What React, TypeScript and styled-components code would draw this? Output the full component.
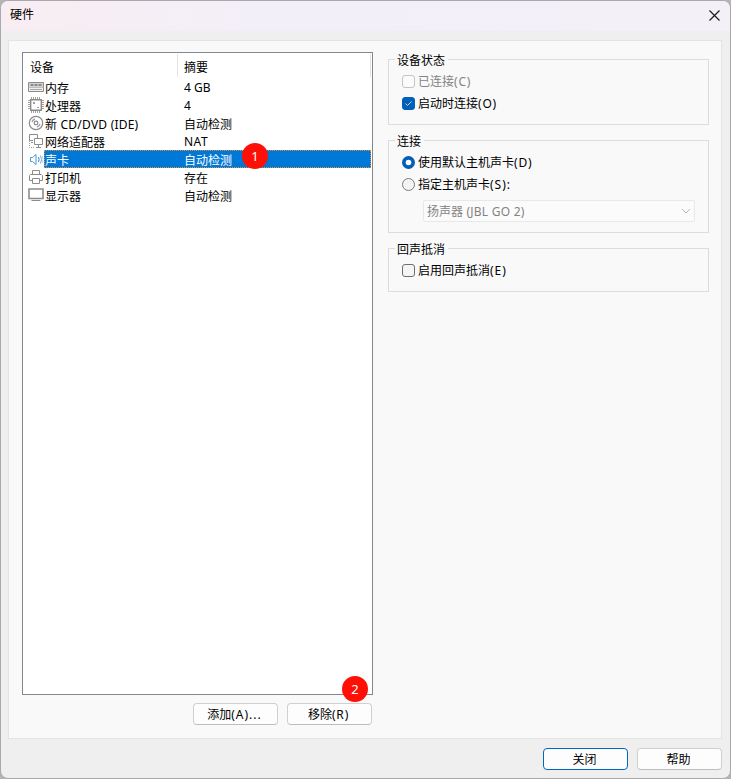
import React from "react";
import styled, { createGlobalStyle, css } from "styled-components";

const GlobalStyle = createGlobalStyle`
  * { box-sizing: border-box; }
  body {
    margin: 0;
    background: #b5b3b6;
    font: 12px/18px "Noto Sans", "Noto Sans CJK SC", sans-serif;
    color: #000;
    overflow: hidden;
  }
`;

const Dialog = styled.div`
  width: 731px;
  height: 779px;
  display: flex;
  flex-direction: column;
  background: #efefef;
  border: 1px solid #a9a8aa;
  border-radius: 8px;
  overflow: hidden;
`;

const TitleBar = styled.header`
  height: 30px;
  flex: none;
  display: flex;
  align-items: center;
  justify-content: space-between;
  padding: 0 10px 2px 9px;
  background: linear-gradient(90deg, #f8edf2, #f3eff8 35%, #f3f0f8);
`;

const Title = styled.span``;

const Panel = styled.main`
  height: 699px;
  flex: none;
  margin: 9px 8px 0 7px;
  border: 1px solid #e4e4e4;
  background: #f9f9f9;
  display: flex;
  gap: 15px;
  padding: 11px 12px 0 13px;
`;

const DeviceColumn = styled.section`
  width: 351px;
  display: flex;
  flex-direction: column;
  position: relative;
`;

const List = styled.div`
  height: 643px;
  border: 1px solid #828790;
  background: #fff;
`;

const ListHeader = styled.div`
  display: flex;
  height: 24px;
  margin-bottom: 1px;
  padding: 1px 1px 0 0;
`;

const HeaderCell = styled.div<{ $width?: number }>`
  ${(p) => (p.$width ? css`width: ${p.$width}px; padding-left: 7px;` : css`flex: 1; padding-left: 6px;`)}
  padding-top: 5px;
  border-right: 1px solid #e3e3e3;
`;

const Row = styled.div`
  height: 18px;
  display: flex;
  padding-left: 5px;
  padding-right: 1px;
`;

const IconBox = styled.div`
  width: 16px;
  height: 18px;
  flex: none;
  svg { display: block; }
`;

const RowBody = styled.div<{ $selected?: boolean }>`
  flex: 1;
  display: flex;
  line-height: 21px;
  ${(p) =>
    p.$selected &&
    css`
      color: #fff;
      background: #0078d7;
      outline: 1px dotted #e68a35;
      outline-offset: -1px;
    `}
`;

const Name = styled.span<{ $spacing?: number }>`
  width: 140px;
  padding-left: 1px;
  white-space: nowrap;
  letter-spacing: ${(p) => p.$spacing ?? 0}px;
`;

const Summary = styled.span<{ $spacing?: number; $latin?: boolean }>`
  letter-spacing: ${(p) => p.$spacing ?? 0}px;
  line-height: ${(p) => (p.$latin ? 19 : 21)}px;
`;

const Badge = styled.span<{ $x: number; $y: number }>`
  position: absolute;
  left: ${(p) => p.$x}px;
  top: ${(p) => p.$y}px;
  width: 26px;
  height: 26px;
  border-radius: 50%;
  background: #ff0f05;
  color: #fff;
  font: 13px/26px "Noto Sans", sans-serif;
  text-align: center;
`;

const ButtonRow = styled.div<{ $footer?: boolean }>`
  display: flex;
  justify-content: flex-end;
  gap: 9px;
  padding: ${(p) => (p.$footer ? "9px 8px 0 0" : "8px 1px 0 0")};
`;

const Button = styled.button<{ $primary?: boolean }>`
  width: 85px;
  height: 22px;
  padding: 2px 2px 0 0;
  border: 1px solid ${(p) => (p.$primary ? "#0067c0" : "#d0d0d0")};
  border-bottom-color: ${(p) => (p.$primary ? "#0067c0" : "#bdbdbd")};
  border-radius: 4px;
  background: #fdfdfd;
  color: #000;
  font: inherit;
  line-height: 18px;
`;

const Latin = styled.span<{ $spacing?: number }>`
  letter-spacing: ${(p) => p.$spacing ?? 0.8}px;
`;

const Settings = styled.section`
  width: 321px;
  display: flex;
  flex-direction: column;
  gap: 15px;
  padding-top: 7px;
`;

const Group = styled.div<{ $height: number }>`
  height: ${(p) => p.$height}px;
  border: 1px solid #dcdcdc;
  padding: 0 13px;
`;

const Legend = styled.div`
  width: fit-content;
  height: 14px;
  margin: -8px 0 0 -7px;
  padding: 0 3px 0 2px;
  line-height: 17px;
  background: #f9f9f9;
`;

const Option = styled.div<{ $disabled?: boolean }>`
  height: 22px;
  display: flex;
  align-items: center;
  gap: 3px;
  color: ${(p) => (p.$disabled ? "#838383" : "#000")};
  svg { flex: none; }
`;

const OptionText = styled.span`
  padding-top: 2px;
`;

const Options = styled.div`
  padding-top: 4px;
`;

const SelectBox = styled.div`
  width: 272px;
  height: 22px;
  margin: 5px 0 0 21px;
  padding: 0 3px;
  display: flex;
  align-items: center;
  justify-content: space-between;
  border: 1px solid #e8e8e8;
  border-radius: 2px;
  background: #fbfbfb;
  color: #838383;
`;

const SelectText = styled.span`
  padding-top: 2px;
`;

const Check = ({ checked, disabled }: { checked?: boolean; disabled?: boolean }) => (
  <svg width="13" height="13" viewBox="0 0 13 13" fill="none">
    <rect
      x=".5" y=".5" width="12" height="12" rx="2.5"
      fill={checked ? "#005fb8" : disabled ? "#fbfbfb" : "#f5f5f5"}
      stroke={checked ? "#005fb8" : disabled ? "#c4c4c4" : "#6e6e6e"}
    />
    {checked && <path d="M3.5 6.5l2 2 4-4" stroke="#b9d8f1" />}
  </svg>
);

const Radio = ({ checked }: { checked?: boolean }) => (
  <svg width="13" height="13" viewBox="0 0 13 13" fill="none">
    {checked ? (
      <>
        <circle cx="6.5" cy="6.5" r="6.5" fill="#005fb8" />
        <circle cx="6.5" cy="6.5" r="2.8" fill="#fff" />
      </>
    ) : (
      <circle cx="6.5" cy="6.5" r="6" fill="#f3f3f3" stroke="#7b7b7b" />
    )}
  </svg>
);

const Svg = ({ children }: { children: React.ReactNode }) => (
  <svg width="16" height="18" viewBox="0 0 16 18" fill="none" stroke="#8c8c8c">
    {children}
  </svg>
);

const icons = {
  memory: (
    <Svg>
      <path d="M.5 4.5h15v5h-15z" fill="#d4d4d4" />
      <path d="M.5 9.5v4h15v-4" fill="#efefef" />
      <path d="M2.5 6h3v2h-3zM6.5 6h3v2h-3zM10.5 6h3v2h-3z" fill="#8c8c8c" stroke="none" />
      <path d="M2 11.5h12" stroke="#a8a8a8" />
    </Svg>
  ),
  cpu: (
    <Svg>
      <path d="M2.7 3.7h10.6v10.6H2.7z" strokeWidth="1.4" />
      <path
        d="M3.5 1v2M5.5 1v2M7.5 1v2M9.5 1v2M11.5 1v2M3.5 15v2M5.5 15v2M7.5 15v2M9.5 15v2M11.5 15v2M0 4.5h2M0 6.5h2M0 8.5h2M0 10.5h2M0 12.5h2M14 4.5h2M14 6.5h2M14 8.5h2M14 10.5h2M14 12.5h2"
        stroke="#a2a2a2"
      />
      <path d="M5 6h2v2H5zM9 11h2v1H9z" fill="#a0a0a0" stroke="none" />
    </Svg>
  ),
  disc: (
    <Svg>
      <circle cx="8" cy="9" r="6.7" strokeWidth="1.2" />
      <circle cx="8" cy="9" r="1.8" strokeWidth="1.2" />
      <path d="M4 8A4.3 4.3 0 0 1 7 5M12 10A4.3 4.3 0 0 1 9 13" stroke="#a5a5a5" strokeWidth="1.4" />
    </Svg>
  ),
  network: (
    <Svg>
      <path d="M5 8.5H1.5v-6h8V6M3 10.5h2M6.5 6.5h8v6h-8zM10.5 12.5v3M8 15.5h5" />
      <path d="M1.5 9v6.5H7" stroke="#9a9a9a" strokeDasharray="1 1" />
    </Svg>
  ),
  sound: (
    <svg width="16" height="18" viewBox="0 0 16 18" fill="none" stroke="#4a9bcb">
      <path d="M2.5 7.5h2l3.5-3v10l-3.5-3h-2z" />
      <path d="M10.5 7q1.2 2.5 0 5" stroke="#2e86c1" />
      <path d="M12.5 5.5q2 4 0 8" stroke="#6bacd3" />
      <path d="M14.5 6q1 3.5 0 7" stroke="#c4d9e8" />
    </svg>
  ),
  printer: (
    <Svg>
      <path d="M4.5 6.5v-4h7v4M4 12.5H1.5v-5l1-1h11l1 1v5H12" />
      <path d="M4.5 10.5h7v5h-7z" />
    </Svg>
  ),
  display: (
    <Svg>
      <path d="M1 3h14v9.5H1z" strokeWidth="1.6" />
      <path d="M3.5 14.5h9" />
    </Svg>
  ),
};

type Device = {
  icon: keyof typeof icons;
  name: string;
  summary: string;
  selected?: boolean;
  latin?: boolean;
  nameSpacing?: number;
  summarySpacing?: number;
};

const devices: Device[] = [
  { icon: "memory", name: "内存", summary: "4 GB", latin: true },
  { icon: "cpu", name: "处理器", summary: "4", latin: true },
  { icon: "disc", name: "新 CD/DVD (IDE)", summary: "自动检测", nameSpacing: 0.22 },
  { icon: "network", name: "网络适配器", summary: "NAT", latin: true, summarySpacing: 0.5 },
  { icon: "sound", name: "声卡", summary: "自动检测", selected: true },
  { icon: "printer", name: "打印机", summary: "存在" },
  { icon: "display", name: "显示器", summary: "自动检测" },
];

export default function App() {
  return (
    <>
      <GlobalStyle />
      <Dialog>
        <TitleBar>
          <Title>硬件</Title>
          <svg width="11" height="11" viewBox="0 0 11 11" fill="none" stroke="#1a1a1a" strokeWidth="1.2">
            <path d="M.5.5l10 10M10.5.5l-10 10" />
          </svg>
        </TitleBar>
        <Panel>
          <DeviceColumn>
            <List>
              <ListHeader>
                <HeaderCell $width={155}>设备</HeaderCell>
                <HeaderCell>摘要</HeaderCell>
              </ListHeader>
              {devices.map((d) => (
                <Row key={d.name}>
                  <IconBox>{icons[d.icon]}</IconBox>
                  <RowBody $selected={d.selected}>
                    <Name $spacing={d.nameSpacing}>{d.name}</Name>
                    <Summary $spacing={d.summarySpacing} $latin={d.latin}>{d.summary}</Summary>
                  </RowBody>
                </Row>
              ))}
            </List>
            <ButtonRow>
              <Button>添加<Latin $spacing={1}>(A)...</Latin></Button>
              <Button>移除<Latin>(R)</Latin></Button>
            </ButtonRow>
            <Badge $x={220} $y={91}>1</Badge>
            <Badge $x={320} $y={624}>2</Badge>
          </DeviceColumn>
          <Settings>
            <Group $height={66}>
              <Legend>设备状态</Legend>
              <Options>
                <Option $disabled><Check disabled /><OptionText>已连接<Latin>(C)</Latin></OptionText></Option>
                <Option><Check checked /><OptionText>启动时连接<Latin>(O)</Latin></OptionText></Option>
              </Options>
            </Group>
            <Group $height={93}>
              <Legend>连接</Legend>
              <Options>
                <Option><Radio checked /><OptionText>使用默认主机声卡<Latin>(D)</Latin></OptionText></Option>
                <Option><Radio /><OptionText>指定主机声卡<Latin $spacing={1}>(S):</Latin></OptionText></Option>
              </Options>
              <SelectBox>
                <SelectText>扬声器<Latin $spacing={0.25}> (JBL GO 2)</Latin></SelectText>
                <svg width="10" height="6" viewBox="0 0 10 6" fill="none" stroke="#b5b5b5">
                  <path d="M1 1l4 4 4-4" />
                </svg>
              </SelectBox>
            </Group>
            <Group $height={44}>
              <Legend>回声抵消</Legend>
              <Options>
                <Option><Check /><OptionText>启用回声抵消<Latin $spacing={1}>(E)</Latin></OptionText></Option>
              </Options>
            </Group>
          </Settings>
        </Panel>
        <ButtonRow $footer>
          <Button $primary>关闭</Button>
          <Button>帮助</Button>
        </ButtonRow>
      </Dialog>
    </>
  );
}
